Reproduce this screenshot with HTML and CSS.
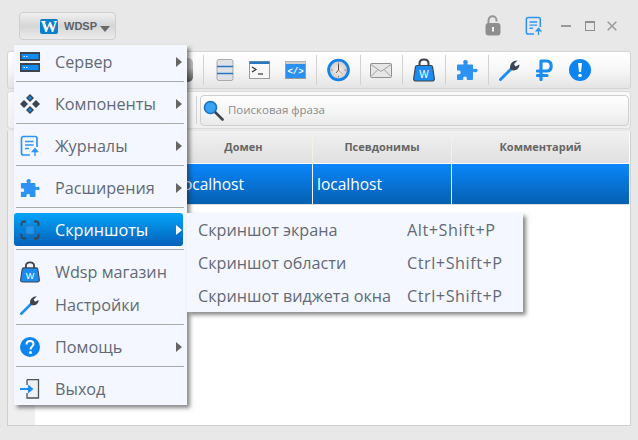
FILE: index.html
```html
<!DOCTYPE html>
<html lang="en">
<head>
    <meta charset="UTF-8">
    <title>WDSP</title>
    <link rel="stylesheet" href="styles.css">
</head>
<body>

    <!-- shared icons -->
    <svg class="defs" width="0" height="0">
        <symbol id="i-log" viewBox="0 0 20 22">
            <path d="M10 20H3.500A2 2 0 0 1 1.500 18V3.500A2 2 0 0 1 3.500 1.500H15A2 2 0 0 1 17 3.500V12" fill="none" stroke="#2e95f5" stroke-width="1.700"/>
            <path d="M5 6.500H13.500M5 10H13.500M5 13.500H9" stroke="#2e95f5" stroke-width="1.600"/>
            <path d="M15 21V15.500M12.500 16.500L15 13.500L17.500 16.500Z" fill="#2e95f5" stroke="#2e95f5" stroke-width="1.400"/>
        </symbol>
        <symbol id="i-puzzle" viewBox="0 0 22 22">
            <path d="M1 6.500C1 6 1.400 5.500 2 5.500H6.500C7.500 5.500 8 5 7.400 4C6.600 2.600 7.600 1 9.500 1S12.400 2.600 11.600 4C11 5 11.500 5.500 12.500 5.500H16C16.600 5.500 17 6 17 6.500V9C17 10 17.500 10.400 18.500 10C20 9.300 21.600 10 21.600 11.500S20 13.700 18.500 13C17.500 12.600 17 13 17 14V20C17 20.600 16.600 21 16 21H11.500C10.800 21 10.600 20.400 10.800 19.800C11.200 18.600 10.400 17.600 9 17.600S6.800 18.600 7.200 19.800C7.400 20.400 7.200 21 6.500 21H2C1.400 21 1 20.600 1 20V16C1 15.200 1.600 15 2.200 15.200C3.400 15.600 4.600 15 4.600 13.400S3.400 11.200 2.200 11.600C1.600 11.800 1 11.600 1 10.800Z" fill="#2e92f5"/>
        </symbol>
        <symbol id="i-bag" viewBox="0 0 22 24">
            <path d="M6.500 9V5.500C6.500 3 8.500 1.500 11 1.500S15.500 3 15.500 5.500V9" fill="none" stroke="#3b4450" stroke-width="2"/>
            <path d="M4 7.500H18C19 7.500 19.400 8 19.600 9L21.300 20.500C21.500 22 20.600 23 19 23H3C1.400 23 .5 22 .7 20.500L2.400 9C2.600 8 3 7.500 4 7.500Z" fill="#1b8cf2" stroke="#3b4450" stroke-width="1.200"/>
        </symbol>
        <symbol id="i-wrench" viewBox="0 0 22 22">
            <path d="M1.500 20.500L12.500 9.500" stroke="#1b8cf2" stroke-width="3" stroke-linecap="round"/>
            <path d="M11.500 10.500C10 6.500 12.500 1.500 18.500 1.500L15 5L16.500 7.500L20.500 5.500C20.500 10 16 13 11.500 10.500Z" fill="#3b4450"/>
        </symbol>
    </svg>

    <div class="window">
        <header class="titlebar">
            <button class="app-btn">
                <span class="app-logo">W</span>
                <span class="app-name">WDSP</span>
                <span class="app-caret"></span>
            </button>
            <div class="title-tools">
                <svg class="lock" width="16" height="21" viewBox="0 0 16 21">
                    <path d="M3.500 8.500V5.500C3.500 3 5.300 1.300 7.500 1.300S11.500 3 11.500 5.500V6.500" fill="none" stroke="#969696" stroke-width="2"/>
                    <rect x="0.500" y="8" width="15" height="12.500" rx="3" fill="#8e8e8e"/>
                    <rect x="7" y="12" width="2" height="4.500" fill="#f2f2f2"/>
                </svg>
                <svg class="log-top" width="18" height="20"><use href="#i-log"/></svg>
                <span class="win-min"></span>
                <span class="win-max"></span>
                <svg class="win-close" width="10" height="10" viewBox="0 0 10 10">
                    <path d="M.7 .7L9.300 9.300M9.300 .7L.7 9.300" stroke="#9a9a9a" stroke-width="1.500"/>
                </svg>
            </div>
        </header>

        <div class="toolbar">
            <span class="tool-hidden"></span>
            <span class="tool-sep"></span>
            <svg class="tool-stack" width="18" height="22" viewBox="0 0 18 22">
                <rect x="1" y=".5" width="16" height="21" rx="2" fill="#dfe2e4" stroke="#a9a9a9"/>
                <path d="M1 7.500H17M1 14.500H17" stroke="#2577bf" stroke-width="1.500"/>
            </svg>
            <svg class="tool-gap" width="21" height="18" viewBox="0 0 21 18">
                <rect x=".5" y=".5" width="20" height="17" fill="#f8f8f8" stroke="#9b9b9b"/>
                <rect x=".5" y=".5" width="20" height="2.500" fill="#2577bf"/>
                <path d="M3 6L7 8.500L3 11" fill="none" stroke="#333" stroke-width="1.200"/>
                <path d="M9 13H14" stroke="#333" stroke-width="1.200"/>
            </svg>
            <svg class="tool-gap" width="21" height="18" viewBox="0 0 21 18">
                <rect x=".5" y=".5" width="20" height="17" fill="#2a90f2" stroke="#9b9b9b"/>
                <rect x=".5" y=".5" width="20" height="2.500" fill="#d0d0d0"/>
                <text x="10.500" y="13" class="code-tag">&lt;/&gt;</text>
            </svg>
            <span class="tool-sep"></span>
            <svg width="23" height="24" viewBox="0 0 24 24">
                <defs>
                    <radialGradient id="clock-face">
                        <stop offset="0" stop-color="#f4efe9"/>
                        <stop offset="1" stop-color="#cfcac4"/>
                    </radialGradient>
                </defs>
                <circle cx="12" cy="12" r="10.300" fill="url(#clock-face)" stroke="#1481ec" stroke-width="3"/>
                <path d="M12 4V6M12 18V20M4 12H6M18 12H20" stroke="#8a8a8a"/>
                <path d="M12 6V12L9.500 15" fill="none" stroke="#444"/>
                <path d="M12 12L16 16" stroke="#d86a5a" stroke-width=".8"/>
            </svg>
            <span class="tool-sep"></span>
            <svg class="tool-mail" width="22" height="15" viewBox="0 0 22 15">
                <rect x=".5" y=".5" width="21" height="14" rx="1" fill="#e6e6e6" stroke="#8f8f8f"/>
                <path d="M1 1.500L11 8.500L21 1.500M1 13.500L8 6.500M21 13.500L14 6.500" fill="none" stroke="#a0a0a0"/>
            </svg>
            <span class="tool-sep"></span>
            <svg width="22" height="24" viewBox="0 0 22 24">
                <use href="#i-bag" width="22" height="24"/>
                <text x="11" y="19.500" class="bag-w">W</text>
            </svg>
            <span class="tool-sep"></span>
            <svg width="22" height="22"><use href="#i-puzzle"/></svg>
            <span class="tool-sep"></span>
            <svg width="22" height="22"><use href="#i-wrench"/></svg>
            <svg class="tool-rub" width="17" height="22" viewBox="0 0 17 22">
                <path d="M5 20.500V2H10.500C13.800 2 15.200 4 15.200 7S13.800 12 10.500 12H1.500M1.500 16.500H11" fill="none" stroke="#1b8cf2" stroke-width="3.200" stroke-linecap="round" stroke-linejoin="round"/>
            </svg>
            <svg class="tool-info" width="22" height="22" viewBox="0 0 22 22">
                <circle cx="11" cy="11" r="11" fill="#0d85ee"/>
                <path d="M9 4H13L12 13H10Z" fill="#fff"/>
                <circle cx="11" cy="16.500" r="1.800" fill="#fff"/>
            </svg>
        </div>

        <div class="searchbar">
            <span class="search-sep"></span>
            <div class="search-box">
                <svg width="21" height="21" viewBox="0 0 21 21">
                    <path d="M12 12L19.500 19.500" stroke="#3b4450" stroke-width="2.600" stroke-linecap="round"/>
                    <circle cx="7.500" cy="7.500" r="6" fill="#3aa2f5" stroke="#1b70c0" stroke-width="1.600"/>
                </svg>
                <span class="search-hint">Поисковая фраза</span>
            </div>
        </div>

        <div class="table">
            <div class="row-heads"></div>
            <div class="table-body">
                <div class="thead">
                    <div class="cell"></div>
                    <div class="cell">Домен</div>
                    <div class="cell">Псевдонимы</div>
                    <div class="cell">Комментарий</div>
                </div>
                <div class="trow">
                    <div class="cell"></div>
                    <div class="cell">localhost</div>
                    <div class="cell">localhost</div>
                    <div class="cell"></div>
                </div>
            </div>
        </div>
    </div>

    <nav class="menu">
        <div class="menu-item has-sub">
            <svg width="20" height="20" viewBox="0 0 20 20">
                <rect width="20" height="9" fill="#3b4450"/><rect x="1.500" y="2" width="17" height="5" fill="#0d8cf2"/>
                <rect y="11" width="20" height="9" fill="#3b4450"/><rect x="1.500" y="13" width="17" height="5" fill="#0d8cf2"/>
                <path d="M3.500 4.500H5M6 4.500H7.500M3.500 15.500H5M6 15.500H7.500" stroke="#d8ecff"/>
            </svg>
            <span>Сервер</span>
        </div>
        <div class="menu-sep"></div>
        <div class="menu-item has-sub">
            <svg width="20" height="20" viewBox="0 0 20 20">
                <path d="M10 0L14 4L10 8L6 4ZM4 6L8 10L4 14L0 10ZM16 6L20 10L16 14L12 10ZM10 12L14 16L10 20L6 16Z" fill="#3b4450"/>
                <path d="M10 2L12 4L10 6L8 4ZM10 14L12 16L10 18L8 16Z" fill="#0d85ee"/>
            </svg>
            <span>Компоненты</span>
        </div>
        <div class="menu-sep"></div>
        <div class="menu-item has-sub">
            <svg width="20" height="22"><use href="#i-log"/></svg>
            <span>Журналы</span>
        </div>
        <div class="menu-sep"></div>
        <div class="menu-item has-sub">
            <svg width="22" height="22"><use href="#i-puzzle"/></svg>
            <span>Расширения</span>
        </div>
        <div class="menu-sep"></div>
        <div class="menu-item has-sub active">
            <svg width="20" height="20" viewBox="0 0 20 20">
                <path d="M1.500 6V3.500A2 2 0 0 1 3.500 1.500H6M14 1.500H16.500A2 2 0 0 1 18.500 3.500V6M18.500 14V16.500A2 2 0 0 1 16.500 18.500H14M6 18.500H3.500A2 2 0 0 1 1.500 16.500V14" fill="none" stroke="#3b4450" stroke-width="1.800"/>
                <rect x="6" y="6" width="8" height="8" fill="#1f96f5" stroke="#4a6f95" stroke-width=".6"/>
            </svg>
            <span>Скриншоты</span>
        </div>
        <div class="menu-sep"></div>
        <div class="menu-item">
            <svg width="20" height="22" viewBox="0 0 22 24">
                <use href="#i-bag" width="22" height="24"/>
                <text x="11" y="19.500" class="bag-w">W</text>
            </svg>
            <span>Wdsp магазин</span>
        </div>
        <div class="menu-item">
            <svg width="20" height="20"><use href="#i-wrench"/></svg>
            <span>Настройки</span>
        </div>
        <div class="menu-sep"></div>
        <div class="menu-item has-sub">
            <svg width="20" height="20" viewBox="0 0 20 20">
                <circle cx="10" cy="10" r="10" fill="#0d85ee"/>
                <path d="M6.500 7.500C6.500 5.500 8 4 10 4S13.500 5.300 13.500 7C13.500 9.500 10.500 9.500 10.500 12.500" fill="none" stroke="#fff" stroke-width="2"/>
                <circle cx="10.500" cy="15.500" r="1.500" fill="#fff"/>
            </svg>
            <span>Помощь</span>
        </div>
        <div class="menu-sep"></div>
        <div class="menu-item">
            <svg width="20" height="20" viewBox="0 0 20 20">
                <path d="M7 .7H18.500V19H7V14" fill="#eef0f2" stroke="#4a525c" stroke-width="1.300"/>
                <path d="M7 .7V6" stroke="#4a525c" stroke-width="1.300"/>
                <path d="M0 9H8V5.500L13.500 10L8 14.500V11H0Z" fill="#1b8cf2"/>
            </svg>
            <span>Выход</span>
        </div>
    </nav>

    <div class="submenu">
        <div class="sub-item"><span>Скриншот экрана</span><span class="shortcut">Alt+Shift+P</span></div>
        <div class="sub-item"><span>Скриншот области</span><span class="shortcut">Ctrl+Shift+P</span></div>
        <div class="sub-item"><span>Скриншот виджета окна</span><span class="shortcut">Ctrl+Shift+P</span></div>
    </div>

</body>
</html>
```
FILE: styles.css
```css
html, body {
    margin: 0;
    padding: 0;
    height: 100%;
    overflow: hidden;
}

body {
    position: relative;
    background-color: #e8e8e8;
    font-family: "Open Sans", "Noto Sans", sans-serif;
    color: #626a75;
}

.defs {
    position: absolute;
}

.bag-w {
    font-family: "Liberation Sans", sans-serif;
    font-size: 10px;
    fill: #fff;
    text-anchor: middle;
}

.code-tag {
    font-family: "Liberation Mono", monospace;
    font-size: 9px;
    font-weight: bold;
    fill: #fff;
    text-anchor: middle;
}

.window {
    display: flex;
    flex-direction: column;
    height: 440px;
    padding: 0 7px 14px;
    box-sizing: border-box;
}

/* Title bar */
.titlebar {
    display: flex;
    flex: none;
    align-items: flex-start;
    justify-content: space-between;
    height: 51px;
    padding: 12px 14px 0 12px;
    box-sizing: border-box;
}

.app-btn {
    display: flex;
    align-items: center;
    width: 97px;
    height: 28px;
    padding: 0 0 0 20px;
    border: 1px solid #cfcfcf;
    border-radius: 4px;
    background: linear-gradient(#f0f0f0, #d6d6d6 50%, #ececec);
    box-sizing: border-box;
}

.app-logo {
    width: 18px;
    height: 15px;
    border-radius: 2px;
    background-color: #0b7fc9;
    color: #fff;
    font-family: "Liberation Serif", serif;
    font-size: 17px;
    font-weight: bold;
    line-height: 15px;
    text-align: center;
}

.app-name {
    margin-left: 6px;
    color: #5d6168;
    font-family: "Liberation Sans", sans-serif;
    font-size: 11px;
    font-weight: bold;
}

.app-caret {
    margin: 6px 0 0 3px;
    border-top: 6px solid #6a6a6a;
    border-left: 5px solid transparent;
    border-right: 5px solid transparent;
}

.title-tools {
    display: flex;
    align-items: center;
    height: 23px;
    margin-top: 2px;
}

.log-top {
    margin-left: 24px;
}

.win-min {
    width: 10px;
    height: 2px;
    margin-left: 18px;
    background-color: #9a9a9a;
}

.win-max {
    width: 8px;
    height: 7px;
    margin-left: 14px;
    border: 1px solid #8f8f8f;
    border-top-width: 2px;
}

.win-close {
    margin-left: 12px;
}

/* Toolbars */
.toolbar {
    display: flex;
    flex: none;
    align-items: center;
    gap: 10px;
    height: 38px;
    padding-left: 179px;
    border: 1px solid #d4d4d4;
    border-radius: 3px;
    background: linear-gradient(#fff, #f7f7f7 50%, #e4e4e4);
    box-sizing: border-box;
}

.tool-hidden {
    width: 6px;
    height: 24px;
    border-radius: 0 5px 5px 0;
    background: linear-gradient(#c4c4c4, #bbb 40%, #555);
}

.tool-sep {
    width: 1px;
    height: 30px;
    background-color: #d2d2d2;
}

.tool-stack {
    margin-left: 2px;
}

.tool-gap, .tool-rub {
    margin-left: 5px;
}

.tool-mail {
    margin-left: -1px;
}

.tool-info {
    margin-left: 6px;
}

.searchbar {
    display: flex;
    flex: none;
    gap: 3px;
    height: 38px;
    margin-top: 2px;
    padding-left: 188px;
    border: 1px solid #dcdcdc;
    border-radius: 3px;
    box-sizing: border-box;
    background: linear-gradient(#fafafa, #efefef);
}

.search-sep {
    flex: none;
    width: 1px;
    height: 28px;
    margin-top: 4px;
    background-color: #d2d2d2;
}

.search-box {
    display: flex;
    flex: 1;
    align-items: center;
    gap: 4px;
    height: 31px;
    margin: 3px 1px 0 0;
    padding-left: 2px;
    border: 1px solid #cfcfcf;
    border-radius: 4px;
    background: linear-gradient(#fff, #f4f4f4 60%, #e9e9e9);
    box-sizing: border-box;
}

.search-hint {
    margin-bottom: 2px;
    color: #8a8a8a;
    font-size: 11.500px;
}

/* Table */
.table {
    display: flex;
    flex: 1;
    margin-top: 2px;
    border: 1px solid #cfcfcf;
    border-top: 0;
    background-color: #fff;
}

.row-heads {
    flex: none;
    width: 27px;
    background-color: #efefef;
}

.table-body {
    flex: 1;
    padding-right: 1px;
}

.thead, .trow {
    display: grid;
    grid-template-columns: 139px 138px 139px 1fr;
}

.thead {
    height: 33px;
    border-bottom: 1px solid #fff;
    box-sizing: border-box;
    background: linear-gradient(#f1f1f1, #e0e0e0);
    color: #666;
    font-size: 11px;
    font-weight: bold;
    line-height: 32px;
    text-align: center;
}

.trow {
    height: 40px;
    border-bottom: 1px solid #dcdcdc;
    background: linear-gradient(#0a86fb, #0560b0);
    color: #fff;
    font-size: 15.500px;
    line-height: 40px;
}

.trow .cell {
    padding-left: 4px;
}

.cell + .cell {
    border-left: 1px solid #f4f1e8;
}

/* Popup menus */
.menu, .submenu {
    position: absolute;
    background-color: #f4f7ff;
    box-shadow: 3px 3px 4px rgba(40, 40, 40, 0.55);
    font-size: 16.200px;
}

.menu {
    left: 14px;
    top: 45px;
    width: 173px;
}

.menu-item {
    position: relative;
    display: flex;
    align-items: center;
    height: 33px;
    width: 169px;
    padding-left: 6px;
    box-sizing: border-box;
}

.menu-item svg {
    flex: none;
    width: 20px;
}

.menu-item span {
    margin-left: 15px;
}

.menu-item.has-sub::after {
    content: "";
    position: absolute;
    right: 1px;
    top: 12px;
    border-left: 6px solid #666;
    border-top: 5px solid transparent;
    border-bottom: 5px solid transparent;
}

.menu-item.active {
    border-radius: 3px;
    background: linear-gradient(#03a4fb, #0660b8);
    color: #fff;
}

.menu-item.active::after {
    border-left-color: #fff;
}

.menu-sep {
    height: 1px;
    margin: 3px 3px 5px 2px;
    background-color: #a9a9a9;
}

.submenu {
    left: 187px;
    top: 213px;
    width: 336px;
}

.sub-item {
    display: flex;
    align-items: center;
    height: 33px;
    padding-left: 11px;
}

.sub-item span:first-child {
    width: 209px;
}

.shortcut {
    letter-spacing: 0.550px;
}
```
